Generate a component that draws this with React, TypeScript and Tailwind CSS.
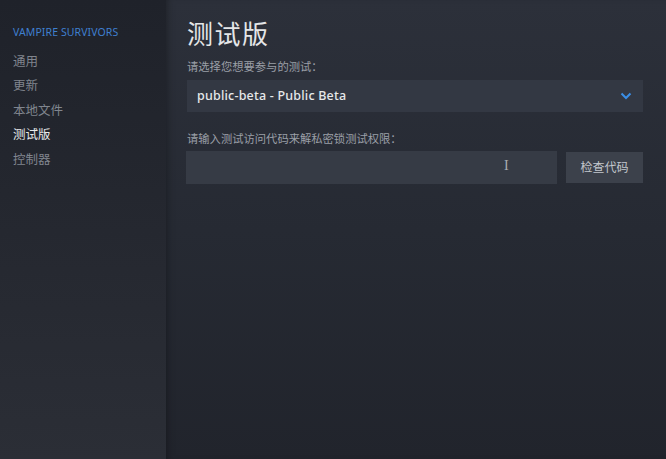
import React from "react";

const font = { fontFamily: '"Noto Sans", "Noto Sans CJK SC", sans-serif' };

export default function App() {
  const items = ["通用", "更新", "本地文件", "测试版", "控制器"];
  return (
    <div
      className="w-[666px] h-[459px] flex overflow-hidden font-['Noto_Sans','Noto_Sans_CJK_SC',sans-serif]"
      style={font}
    >
      <aside className="w-[166px] shrink-0 bg-gradient-to-b from-[#1f222a] to-[#2b2e36] pl-[13px] pt-[25px]">
        <div className="text-[10.5px] leading-[14px] text-[#3f7fcf] tracking-[0.1px]">
          VAMPIRE SURVIVORS
        </div>
        <ul className="mt-[11px] flex flex-col">
          {items.map((t) => (
            <li
              key={t}
              className={
                "h-[24.4px] leading-[24.4px] text-[12.5px] " +
                (t === "测试版" ? "text-[#e8eaec]" : "text-[#80858e]")
              }
            >
              {t}
            </li>
          ))}
        </ul>
      </aside>
      <main className="flex-1 bg-gradient-to-b from-[#2c303a] via-[#262a33] to-[#21242c] pl-[21px] pr-[23px] pt-[18px] shadow-[inset_6px_0_8px_-6px_rgba(0,0,0,0.4)]">
        <h1 className="text-[26px] leading-[32px] text-[#e4e6e8] tracking-[1.5px]">测试版</h1>
        <div className="mt-[9px] text-[11.3px] leading-[16px] text-[#9a9fa7]">请选择您想要参与的测试：</div>
        <div className="mt-[5px] h-[32px] w-[456px] bg-[#333843] flex items-center justify-between pl-[10px] pr-[10px]">
          <span className="text-[12.5px] font-medium tracking-[0.2px] text-[#e6e8ea]">public-beta - Public Beta</span>
          <svg width="12" height="8" viewBox="0 0 12 8" className="mr-[1px]">
            <path d="M1.5 1.5 L6 6 L10.5 1.5" fill="none" stroke="#3a8ee6" strokeWidth="2" />
          </svg>
        </div>
        <div className="mt-[19px] text-[11.3px] leading-[16px] text-[#9a9fa7]">请输入测试访问代码来解私密锁测试权限：</div>
        <div className="mt-[4px] flex items-center gap-[9px]">
          <div className="relative w-[371px] h-[33px] bg-[#363b45] -ml-[1px]">
            <span className="absolute left-[318px] top-[6px] text-[14px] leading-[18px] text-[#a8acb2] font-['Liberation_Serif',serif]">I</span>
          </div>
          <button className="w-[77px] h-[31px] bg-[#3c414b] text-[12px] text-[#c4c8ce]">检查代码</button>
        </div>
      </main>
    </div>
  );
}
